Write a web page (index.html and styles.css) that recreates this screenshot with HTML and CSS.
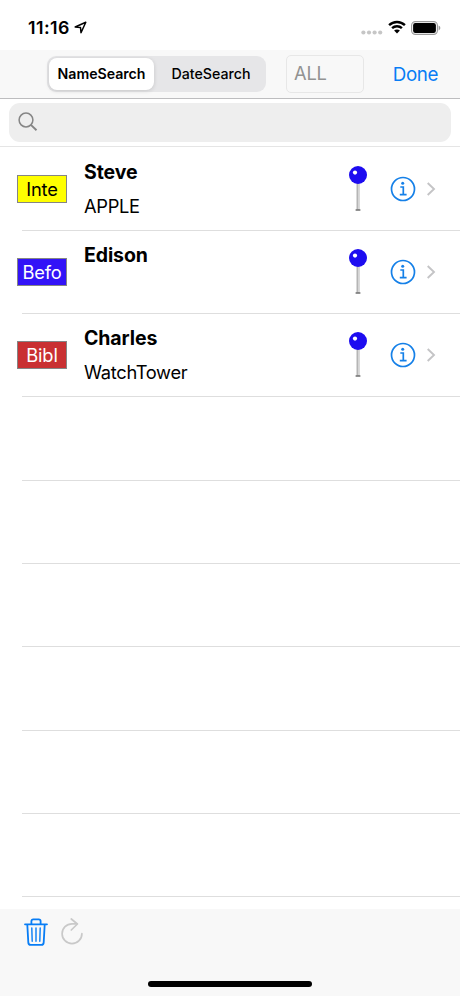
FILE: index.html
```
<!DOCTYPE html>
<html lang="en">
<head>
  <meta charset="UTF-8">
  <title>Name Search</title>
  <meta name="viewport" content="width=device-width, initial-scale=1.0">
  <link rel="stylesheet" href="styles.css">
</head>
<body>
  <!-- shared row icons -->
  <svg class="symbols" width="0" height="0">
    <symbol id="pin" viewBox="0 0 20 48">
      <path d="M10 17V45" stroke="#b5b5b5" stroke-width="3"/>
      <path d="M10.5 18V44" stroke="#d5d5d5" stroke-width="1"/>
      <path d="M7.6 45H12.4" stroke="#777" stroke-width="1.6"/>
      <circle cx="10" cy="10" r="9" fill="#1d0cf0"/>
      <circle cx="7" cy="7.6" r="2.1" fill="#fff"/>
    </symbol>
    <symbol id="info" viewBox="0 0 26 26">
      <circle cx="13" cy="13" r="11.5" fill="none" stroke="#1580e8" stroke-width="1.7"/>
      <circle cx="12.7" cy="7.2" r="1.5" fill="#1580e8"/>
      <path d="M10.3 11H13.3V18.6M9.8 18.7H16.6" fill="none" stroke="#1580e8" stroke-width="1.7"/>
    </symbol>
    <symbol id="chevron" viewBox="0 0 10 16">
      <path d="M1.7 2L8 8L1.7 14" fill="none" stroke="#c4c4c6" stroke-width="1.9"/>
    </symbol>
  </svg>

  <header class="status">
    <span class="time">11:16</span>
    <svg class="location" width="13" height="13" viewBox="0 0 13 13"><path d="M1.2 6L11.8 1.2L7 11.8L6.5 6.5Z" fill="none" stroke="#000" stroke-width="1.5" stroke-linejoin="round"/></svg>
    <svg class="signal" width="22" height="5" viewBox="0 0 22 5" fill="#c6c6c6"><circle cx="2.4" cy="2.5" r="2.1"/><circle cx="8" cy="2.5" r="2.1"/><circle cx="13.6" cy="2.5" r="2.1"/><circle cx="19.2" cy="2.5" r="2.1"/></svg>
    <svg class="wifi" width="18" height="14" viewBox="0 0 18 14"><path d="M1.1 5.2C5.5 .9 12.5 .9 16.9 5.2M4.1 8.2C6.8 5.6 11.2 5.6 13.9 8.2" fill="none" stroke="#000" stroke-width="2.4"/><path d="M9 13.4L6.1 10.5C7.7 9 10.3 9 11.9 10.5Z"/></svg>
    <svg class="battery" width="30" height="14" viewBox="0 0 30 14"><rect x=".6" y=".6" width="25.8" height="12.8" rx="3.8" fill="none" stroke="#999" stroke-width="1.1"/><rect x="2.1" y="2.1" width="22.8" height="9.8" rx="2.2"/><path d="M27.6 4.6C29.9 5.3 29.9 8.7 27.6 9.4Z" fill="#999"/></svg>
  </header>

  <nav class="navbar">
    <div class="segmented">
      <div class="segment selected">NameSearch</div>
      <div class="segment">DateSearch</div>
    </div>
    <div class="filter">ALL</div>
    <div class="done">Done</div>
  </nav>

  <div class="search">
    <div class="search-field">
      <svg width="20" height="20" viewBox="0 0 20 20"><circle cx="8" cy="8" r="6.9" fill="none" stroke="#858585" stroke-width="1.5"/><path d="M12.9 12.9L18.5 18.3" stroke="#858585" stroke-width="1.9"/></svg>
    </div>
  </div>

  <main class="list">
    <div class="row">
      <div class="tag yellow">Inte</div>
      <div class="person">
        <div class="name">Steve</div>
        <div class="company">APPLE</div>
      </div>
      <svg class="pin"><use href="#pin"/></svg>
      <svg class="info"><use href="#info"/></svg>
      <svg class="chevron"><use href="#chevron"/></svg>
    </div>
    <div class="row">
      <div class="tag blue">Befo</div>
      <div class="person">
        <div class="name">Edison</div>
      </div>
      <svg class="pin"><use href="#pin"/></svg>
      <svg class="info"><use href="#info"/></svg>
      <svg class="chevron"><use href="#chevron"/></svg>
    </div>
    <div class="row">
      <div class="tag red">Bibl</div>
      <div class="person">
        <div class="name">Charles</div>
        <div class="company">WatchTower</div>
      </div>
      <svg class="pin"><use href="#pin"/></svg>
      <svg class="info"><use href="#info"/></svg>
      <svg class="chevron"><use href="#chevron"/></svg>
    </div>
    <div class="row"></div>
    <div class="row"></div>
    <div class="row"></div>
    <div class="row"></div>
    <div class="row"></div>
    <div class="row"></div>
  </main>

  <footer class="toolbar">
    <div class="actions">
      <svg width="24" height="28" viewBox="0 0 24 28" fill="none" stroke="#087df5" stroke-width="1.8" stroke-linecap="round" stroke-linejoin="round"><path d="M1 6.3H23M7.4 6V3.3Q7.4 1.4 9.3 1.4H14.7Q16.6 1.4 16.6 3.3V6M3.3 6.5L4.3 24.4Q4.4 26.9 6.7 26.9H17.3Q19.6 26.9 19.7 24.4L20.7 6.5"/><path d="M7.8 10L8.2 23.2M12 10V23.2M16.2 10L15.8 23.2" stroke-width="1.4"/></svg>
      <svg width="22" height="27" viewBox="0 0 22 27" fill="none" stroke="#c9c9c9" stroke-width="1.7" stroke-linecap="round" stroke-linejoin="round"><path d="M16 5.8H11A9.9 9.9 0 1 0 20.9 15.7"/><path d="M10.3 1L16.4 6L10.3 12"/></svg>
    </div>
    <div class="home-bar"></div>
  </footer>
</body>
</html>
```
FILE: styles.css
```
* {
  box-sizing: border-box;
}

body {
  display: flex;
  flex-direction: column;
  width: 460px;
  height: 996px;
  margin: 0;
  overflow: hidden;
  background: #fff;
  color: #000;
  font-family: Inter, "Liberation Sans", sans-serif;
}

svg {
  display: block;
  flex: none;
}

.symbols {
  display: none;
}

.status {
  display: flex;
  flex: none;
  height: 50px;
  padding: 0 19px 0 28px;
}

.time {
  width: 46px;
  margin-top: 17px;
  font-size: 17.8px;
  font-weight: 600;
  letter-spacing: .45px;
  line-height: 22px;
}

.location {
  margin-top: 21px;
}

.signal {
  margin: 30px 5px 0 auto;
}

.wifi {
  margin: 20px 5px 0 0;
}

.battery {
  margin-top: 21px;
}

.navbar {
  display: flex;
  flex: none;
  align-items: flex-start;
  height: 49px;
  padding: 5px 22px 0 47px;
  background: #f8f8f8;
  border-bottom: 1px solid #bdbdbf;
}

.segmented {
  display: flex;
  width: 219px;
  height: 36px;
  margin-top: 1px;
  padding: 2px;
  border-radius: 9px;
  background: #e6e6e8;
}

.segment {
  flex: 1;
  padding-left: 4px;
  font-size: 14.2px;
  font-weight: 500;
  line-height: 32px;
  text-align: center;
}

.selected {
  flex: 0 0 105px;
  padding-left: 0;
  border-radius: 8px;
  background: #fff;
  box-shadow: 0 1px 4px rgba(0, 0, 0, .14);
  font-weight: 600;
  letter-spacing: -.05px;
}

.filter {
  width: 78px;
  height: 38px;
  margin-left: 20px;
  padding-left: 7px;
  border: 1px solid #e7e7e7;
  border-radius: 5px;
  color: #929292;
  font-size: 18.3px;
  letter-spacing: -.2px;
  line-height: 34px;
}

.done {
  margin-left: auto;
  color: #087df5;
  font-size: 18.8px;
  letter-spacing: -.4px;
  line-height: 39px;
}

.search {
  flex: none;
  height: 48px;
  padding: 4px 9px;
  border-bottom: 1px solid #e5e5e5;
}

.search-field {
  height: 39px;
  padding: 9px;
  border-radius: 11px;
  background: #eee;
}

.list {
  flex: 1;
  padding-top: .6px;
}

.row {
  display: flex;
  align-items: center;
  height: 83.3px;
  margin-left: 22px;
  border-bottom: 1px solid #dedede;
}

.tag {
  flex: none;
  width: 50px;
  height: 28px;
  margin-left: -5px;
  border: 1px solid #858585;
  font-size: 18.3px;
  letter-spacing: -.15px;
  line-height: 26px;
  text-align: center;
}

.yellow {
  background: #ff0;
}

.blue {
  background: #3213f7;
  color: #fff;
}

.red {
  background: #c93032;
  color: #fff;
}

.person {
  flex: 1;
  align-self: flex-start;
  padding: 12px 0 0 17px;
}

.name {
  margin-bottom: 9px;
  font-size: 19.5px;
  font-weight: 700;
  letter-spacing: -.1px;
  line-height: 25px;
}

.company {
  font-size: 18.3px;
  letter-spacing: -.3px;
  line-height: 25px;
}

.pin {
  width: 20px;
  height: 48px;
  margin-right: 22px;
}

.info {
  width: 26px;
  height: 26px;
  margin-right: 10px;
}

.chevron {
  width: 10px;
  height: 16px;
  margin-right: 24px;
}

.toolbar {
  display: flex;
  flex: none;
  flex-direction: column;
  justify-content: space-between;
  height: 87px;
  padding: 9px 24px;
  background: #f8f8f8;
}

.actions {
  display: flex;
  gap: 13px;
}

.home-bar {
  width: 164px;
  height: 6px;
  margin-left: 124px;
  border-radius: 3px;
  background: #000;
}
```
